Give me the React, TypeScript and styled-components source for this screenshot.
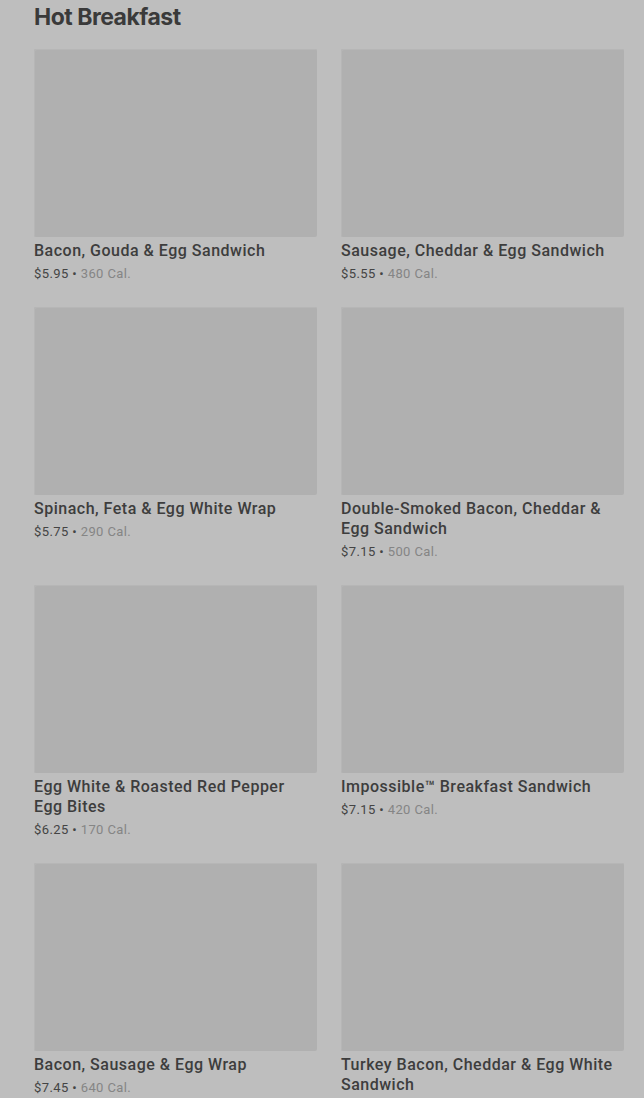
import React from "react";
import styled, { createGlobalStyle } from "styled-components";

const GlobalStyle = createGlobalStyle`
    html, body {
        margin: 0;
        padding: 0;
        background: #bebebe;
    }
    body {
        font-family: Roboto, "Liberation Sans", sans-serif;
    }
`;

const Page = styled("section")`
    padding: 0 20px 0 34px;
    height: 1098px;
    overflow: hidden;
`;

const Heading = styled("h2")`
    margin: 0;
    padding-top: 3px;
    height: 46px;
    font-family: Inter, "Liberation Sans", sans-serif;
    font-weight: 700;
    font-size: 23px;
    line-height: 28px;
    letter-spacing: -0.5px;
    color: #3a3a3a;
`;

const Grid = styled("div")`
    display: grid;
    grid-template-columns: 283px 283px;
    column-gap: 24px;
    row-gap: 24px;
`;

const Card = styled("div")`
    display: flex;
    flex-direction: column;
`;

const Photo = styled("div")`
    height: 188px;
    background: #b0b0b0;
    border-radius: 2px;
    box-shadow: inset 1px 1px 0 #b6b6b6;
`;

const Name = styled("div")`
    margin-top: 4px;
    font-size: 16px;
    font-weight: 500;
    line-height: 20px;
    color: #3d3d3d;
    letter-spacing: 0.5px;
`;

const Meta = styled("div")`
    margin-top: 4px;
    font-size: 13px;
    line-height: 18px;
    letter-spacing: 0.4px;
    color: #444;
`;

const Calories = styled("span")`
    color: #858585;
`;

type Item = {
    name: string;
    price: string;
    cal: number;
};

const items: Item[] = [
    { name: "Bacon, Gouda & Egg Sandwich", price: "$5.95", cal: 360 },
    { name: "Sausage, Cheddar & Egg Sandwich", price: "$5.55", cal: 480 },
    { name: "Spinach, Feta & Egg White Wrap", price: "$5.75", cal: 290 },
    { name: "Double-Smoked Bacon, Cheddar & Egg Sandwich", price: "$7.15", cal: 500 },
    { name: "Egg White & Roasted Red Pepper Egg Bites", price: "$6.25", cal: 170 },
    { name: "Impossible™ Breakfast Sandwich", price: "$7.15", cal: 420 },
    { name: "Bacon, Sausage & Egg Wrap", price: "$7.45", cal: 640 },
    { name: "Turkey Bacon, Cheddar & Egg White Sandwich", price: "$5.25", cal: 230 },
];

const App = () => (
    <>
        <GlobalStyle />
        <Page>
            <Heading>Hot Breakfast</Heading>
            <Grid>
                {items.map((item) => (
                    <Card key={item.name}>
                        <Photo />
                        <Name>{item.name}</Name>
                        <Meta>
                            {item.price} • <Calories>{item.cal} Cal.</Calories>
                        </Meta>
                    </Card>
                ))}
            </Grid>
        </Page>
    </>
);

export default App;
